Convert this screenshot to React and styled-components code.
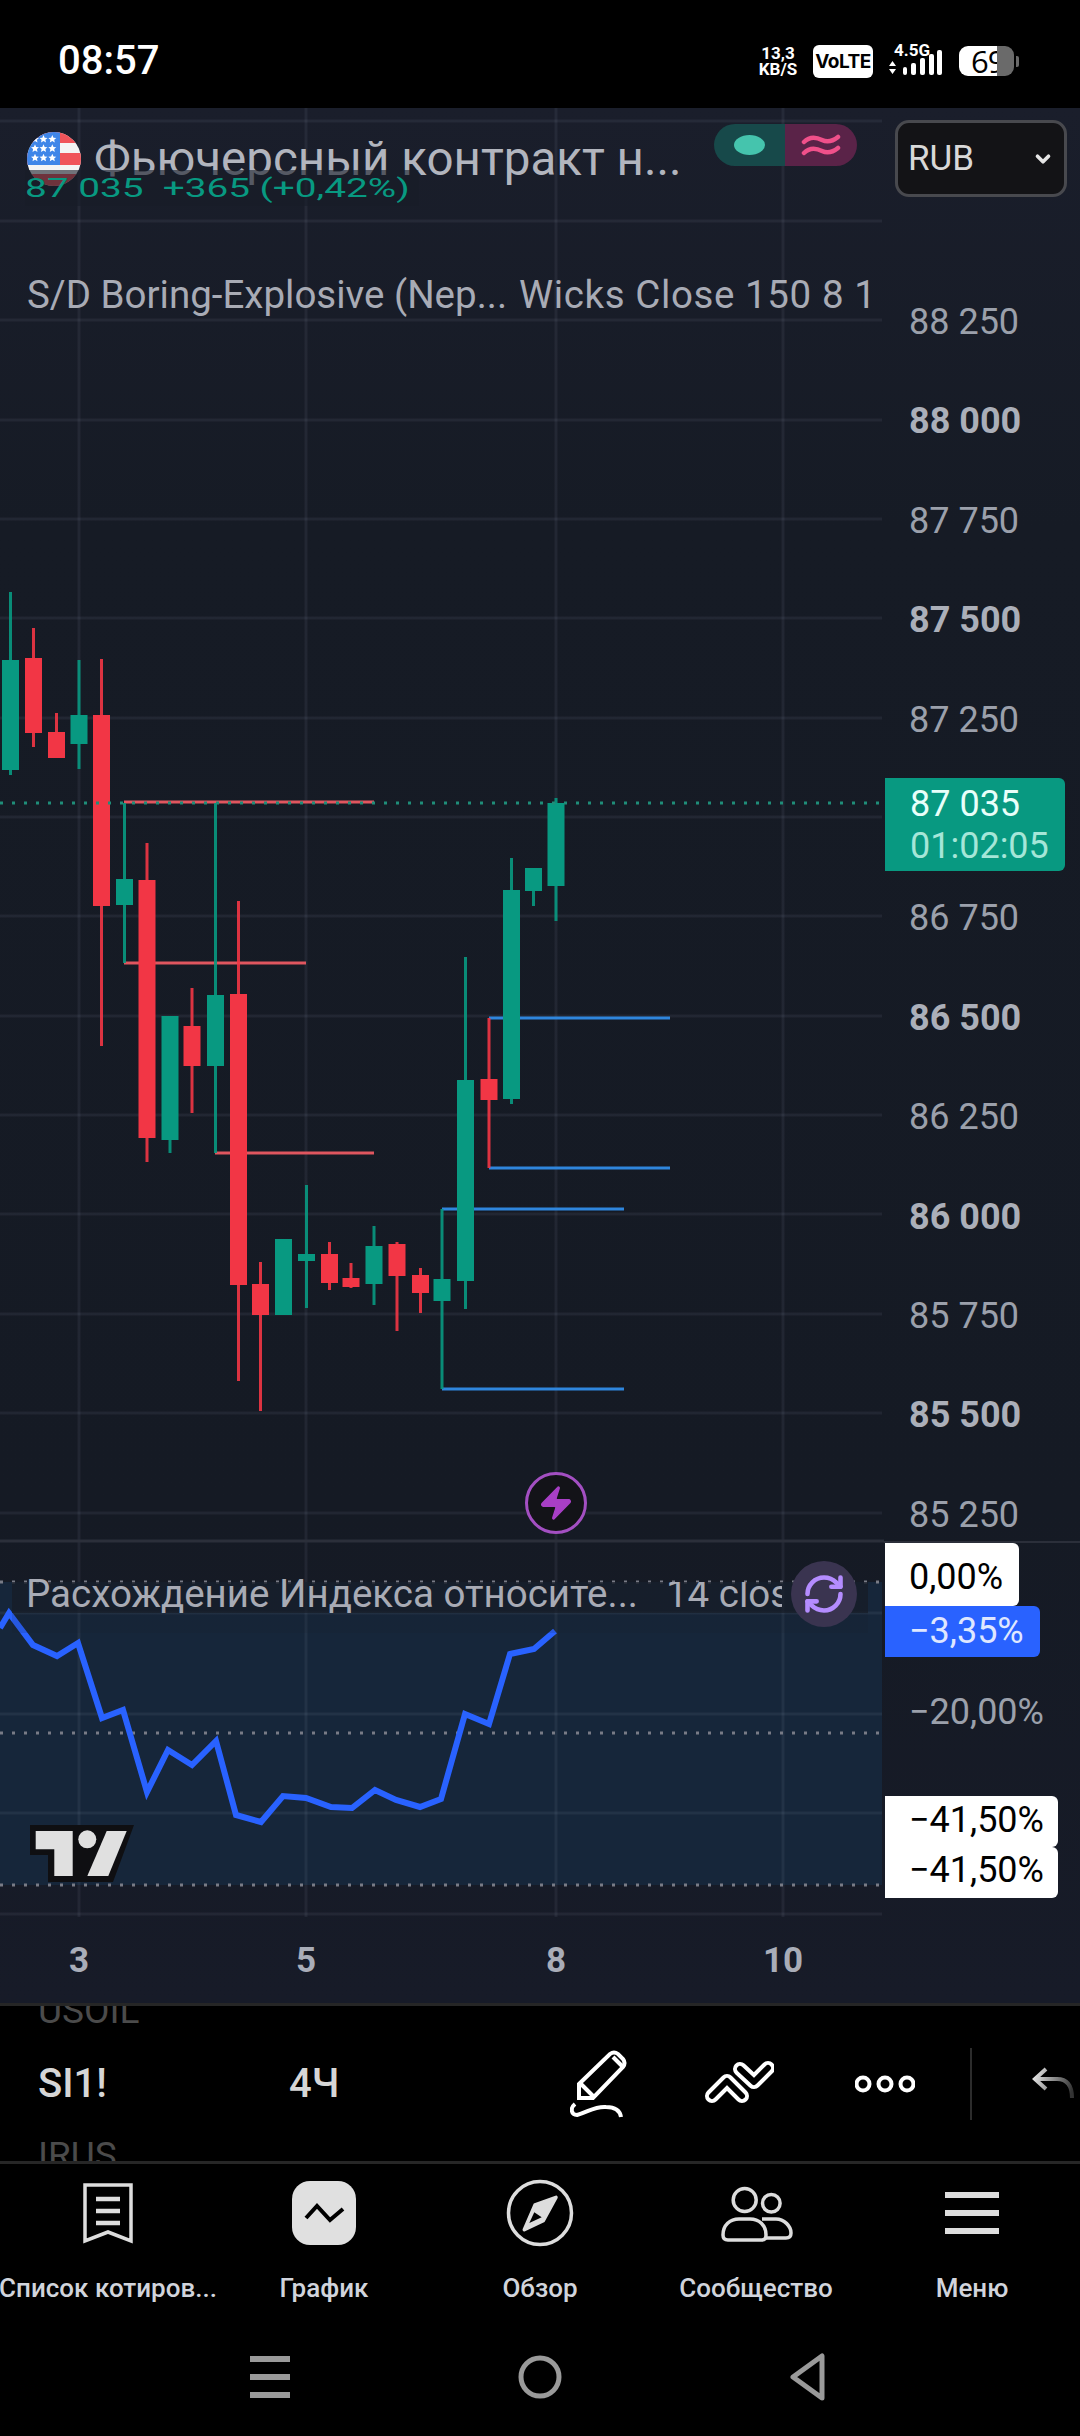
import React from 'react'
import styled, { createGlobalStyle } from 'styled-components'
import { ChevronDown, RefreshCw, Zap } from 'lucide-react'

const GlobalStyle = createGlobalStyle`
  html, body { margin: 0; padding: 0; background: #000; }
  * { box-sizing: border-box; }
`

const GREEN = '#089981'
const RED = '#f23645'
const BLUE = '#2f86dd'

// x, wick top, wick bottom, body top, body bottom, green?
const candles = [
  [10.5, 592, 775, 660, 770, 1],
  [33.5, 628, 747, 658, 733, 0],
  [56.5, 713, 758, 732, 758, 0],
  [79, 660, 769, 715, 744, 1],
  [101.5, 659, 1046, 715, 906, 0],
  [124.5, 803, 963, 879, 905, 1],
  [147, 843, 1162, 880, 1138, 0],
  [170, 1016, 1153, 1016, 1140, 1],
  [192, 988, 1113, 1026, 1066, 0],
  [215.5, 803, 1153, 995, 1066, 1],
  [238.5, 901, 1381, 994, 1285, 0],
  [260.5, 1262, 1411, 1284, 1315, 0],
  [283.5, 1239, 1315, 1239, 1315, 1],
  [306.5, 1185, 1308, 1254, 1261, 1],
  [329.5, 1242, 1290, 1254, 1283, 0],
  [351, 1263, 1288, 1278, 1287, 0],
  [374, 1226, 1305, 1246, 1284, 1],
  [397, 1242, 1331, 1244, 1276, 0],
  [420.5, 1268, 1313, 1275, 1293, 0],
  [442, 1209, 1389, 1279, 1301, 1],
  [465.5, 957, 1309, 1080, 1281, 1],
  [489, 1018, 1168, 1079, 1100, 0],
  [511.5, 858, 1104, 890, 1099, 1],
  [533.5, 868, 906, 868, 891, 1],
  [556, 798, 921, 803, 886, 1],
]

// x1, x2, y, colour
const zones = [
  [124, 374, 802, '#e0565f'],
  [124, 306, 963, '#e0565f'],
  [215, 374, 1153, '#e0565f'],
  [489, 670, 1018, BLUE],
  [489, 670, 1168, BLUE],
  [442, 624, 1209, BLUE],
  [442, 624, 1389, BLUE],
]

const gridY = [121, 221, 320, 420, 519, 618, 718, 817, 916, 1016, 1115, 1214, 1314, 1413, 1513, 1613, 1714, 1813, 1914]
const gridX = [79, 306, 556, 783]

const indicatorLine = '0,1628 9,1613 33,1645 57,1656 78,1643 102,1718 123,1710 147,1792 168,1750 192,1765 216,1741 236,1815 261,1822 283,1796 306,1798 331,1807 352,1808 375,1790 396,1800 420,1807 441,1799 465,1714 489,1724 510,1654 534,1649 555,1631'

const prices = [
  ['88 250'], ['88 000', 1], ['87 750'], ['87 500', 1], ['87 250'], [''],
  ['86 750'], ['86 500', 1], ['86 250'], ['86 000', 1], ['85 750'], ['85 500', 1], ['85 250'],
]

const flagStars = [7, 16.3, 25.7].flatMap(y => [8, 16.5, 25.3].map(x => [x, y]))

const Page = styled.div`
  width: 1080px;
  height: 2436px;
  background: #000;
  display: flex;
  flex-direction: column;
  overflow: hidden;
  font-family: Roboto, "Noto Sans", sans-serif;
`

const StatusBar = styled.div`
  height: 108px;
  flex: none;
  display: flex;
  align-items: flex-start;
  justify-content: space-between;
  padding: 38px 61px 0 58px;
  color: #fff;
`

const Clock = styled.div`
  font-size: 40px;
  line-height: 46px;
  font-weight: 500;
`

const StatusIcons = styled.div`
  height: 46px;
  display: flex;
  align-items: center;
`

const NetSpeed = styled.div`
  font-weight: 700;
  font-size: 17px;
  line-height: 16px;
  text-align: center;
  width: 40px;
`

const Volte = styled.div`
  width: 60px;
  height: 33px;
  margin-left: 15px;
  border-radius: 6px;
  background: #fff;
  color: #000;
  font: 700 19px/33px Inter, sans-serif;
  letter-spacing: -0.5px;
  text-align: center;
`

const Signal = styled.div`
  width: 56px;
  margin-left: 16px;
  height: 34px;
  position: relative;
`

const SignalLabel = styled.span`
  position: absolute;
  left: 5px;
  top: -3px;
  font-weight: 700;
  font-size: 17px;
  line-height: 18px;
`

const Battery = styled.div`
  width: 55px;
  height: 30px;
  margin-left: 14px;
  border-radius: 9px;
  background: linear-gradient(90deg, #fff 38px, #6a6a6a 38px);
  position: relative;
  overflow: hidden;
  color: #000;
  font: 500 31px/30px "Open Sans", Roboto, sans-serif;
`

const BatteryText = styled.span`
  display: block;
  width: 38px;
  padding-left: 12px;
  overflow: hidden;
  letter-spacing: -1px;
`

const BatteryTip = styled.div`
  width: 3px;
  height: 11px;
  margin-left: 2px;
  background: #6a6a6a;
  border-radius: 0 2px 2px 0;
`

const ChartArea = styled.div`
  height: 1895px;
  flex: none;
  background: linear-gradient(180deg, #1a1e2b 0, #161b25 420px, #151a24 1400px, #171b28 1895px);
  display: flex;
  flex-direction: column;
`

const Panes = styled.div`
  height: 1809px;
  display: flex;
  flex: none;
`

const Plot = styled.div`
  width: 884px;
  flex: none;
  position: relative;
  overflow: hidden;
`

const PlotSvg = styled.svg`
  display: block;
  width: 884px;
  height: 1809px;
`

const MainLegend = styled.div`
  position: absolute;
  left: 0;
  top: 0;
  width: 884px;
  padding: 24px 0 0 27px;
`

const TitleRow = styled.div`
  display: flex;
  align-items: center;
  height: 54px;
  gap: 13px;
`

const Title = styled.div`
  font-size: 47.5px;
  line-height: 54px;
  color: #b2b5be;
  white-space: nowrap;
`

const Pill = styled.div`
  position: absolute;
  left: 714px;
  top: 16px;
  width: 143px;
  height: 42px;
  border-radius: 21px;
  overflow: hidden;
  display: flex;
`

const PillPart = styled.div`
  flex: none;
  width: ${p => p.$w}px;
  background: ${p => p.$bg};
  display: flex;
  align-items: center;
  justify-content: center;
`

const PillDot = styled.div`
  width: 31px;
  height: 20px;
  border-radius: 50%;
  background: #45c4ad;
`

const ValueRow = styled.div`
  margin: -16px 0 0 -2px;
  height: 36px;
  width: 264px;
  transform: scaleX(1.49);
  transform-origin: left center;
  background: rgba(24, 28, 40, 0.6);
  color: ${GREEN};
  font-size: 26px;
  line-height: 36px;
  white-space: pre;
  position: relative;
`

const StudyRow = styled.div`
  margin-top: 67px;
  width: 842px;
  height: 44px;
  display: flex;
  gap: 12px;
  overflow: hidden;
  color: #a8abb5;
  font-size: 38.5px;
  line-height: 44px;
  white-space: nowrap;
`

const StudyInputs = styled.span`
  letter-spacing: 0.6px;
`

const IndicatorLegend = styled.div`
  position: absolute;
  left: 12px;
  top: 1474px;
  width: 856px;
  height: 51px;
  padding-left: 14px;
  background: linear-gradient(180deg, rgba(22, 27, 37, 0.72) 31px, rgba(22, 27, 37, 0.14) 31px);
  color: #a8abb5;
  font-size: 38.5px;
  line-height: 24px;
  white-space: nowrap;
  display: flex;
  gap: 28px;
  align-items: flex-start;
`

const ClippedInput = styled.span`
  width: 116px;
  overflow: hidden;
  height: 40px;
`

const SyncButton = styled.div`
  position: absolute;
  left: 791px;
  top: 1453px;
  width: 66px;
  height: 66px;
  border-radius: 50%;
  background: #3a3450;
  color: #b48cff;
  display: flex;
  align-items: center;
  justify-content: center;
`

const BoltButton = styled.div`
  position: absolute;
  left: 525px;
  top: 1364px;
  width: 62px;
  height: 62px;
  border-radius: 50%;
  border: 3px solid #a34fc2;
  background: #131318;
  color: #a83fc6;
  display: flex;
  align-items: center;
  justify-content: center;
`

const Logo = styled.svg`
  position: absolute;
  left: 30px;
  top: 1717px;
`

const Axis = styled.div`
  flex: 1;
  min-width: 0;
  display: flex;
  flex-direction: column;
  position: relative;
  font-size: 36px;
  color: #9ba0ab;
`

const CurrencySelect = styled.div`
  width: 172px;
  height: 77px;
  margin: 12px 0 0 11px;
  border: 3px solid #48494e;
  border-radius: 14px;
  background: #131316;
  color: #d8d8d8;
  font-size: 35px;
  display: flex;
  align-items: center;
  justify-content: space-between;
  padding: 0 10px 0 10px;
  flex: none;
`

const PriceScale = styled.div`
  height: 1268px;
  flex: none;
  margin-top: 76px;
  padding-left: 25px;
`

const PriceRow = styled.div`
  height: 99.4px;
  line-height: 99.4px;
  font-weight: ${p => (p.$bold ? 700 : 400)};
  color: ${p => (p.$bold ? '#abafb9' : '#9ba0ab')};
`

const LastPriceTag = styled.div`
  position: absolute;
  left: 1px;
  top: 670px;
  width: 180px;
  height: 93px;
  padding: 5px 0 0 25px;
  border-radius: 0 6px 6px 0;
  background: ${GREEN};
  color: #e8fffa;
  line-height: 42px;
`

const Countdown = styled.div`
  color: #a5e6d8;
`

const IndicatorScale = styled.div`
  flex: 1;
  border-top: 2px solid #2b2f3a;
  display: flex;
  flex-direction: column;
  align-items: flex-start;
`

const ScaleTag = styled.div`
  margin-left: 1px;
  margin-top: ${p => p.$top || 0}px;
  width: ${p => p.$w}px;
  height: ${p => p.$h}px;
  line-height: ${p => p.$lh || p.$h}px;
  padding-left: 24px;
  border-radius: 0 6px 6px 0;
  background: ${p => p.$bg || 'transparent'};
  color: ${p => p.$color};
`

const TimeAxis = styled.div`
  height: 86px;
  flex: none;
  display: grid;
  grid-template-columns: 158px 296px 204px 250px;
  align-items: center;
  text-align: center;
  font-size: 35px;
  font-weight: 700;
  color: #a9adb8;
`

const Toolbar = styled.div`
  height: 161px;
  flex: none;
  position: relative;
  overflow: hidden;
  border-top: 3px solid #262626;
  border-bottom: 3px solid #262626;
  background: #000;
  display: flex;
  align-items: center;
  padding-left: 38px;
  color: #d6d6d6;
  font-size: 40px;
  font-weight: 500;
`

const Ghost = styled.div`
  position: absolute;
  left: 38px;
  top: ${p => p.$top}px;
  font-size: 37px;
  font-weight: 400;
  line-height: 44px;
  color: #4b4b4b;
`

const Cell = styled.div`
  width: ${p => p.$w}px;
  flex: none;
`

const ToolIcon = styled.svg`
  display: block;
  flex: none;
  margin-left: ${p => p.$gap || 0}px;
`

const ToolDivider = styled.div`
  width: 2px;
  height: 72px;
  flex: none;
  margin-left: 55px;
  background: #2c2c2c;
`

const NavBar = styled.div`
  display: grid;
  grid-template-columns: repeat(5, 216px);
  height: 147px;
  flex: none;
  background: #000;
`

const NavItem = styled.div`
  display: flex;
  flex-direction: column;
  align-items: center;
  padding-top: 12px;
  min-width: 0;
`

const NavIcon = styled.div`
  height: 74px;
  display: flex;
  align-items: center;
  justify-content: center;
`

const NavLabel = styled.div`
  margin-top: 21px;
  font-size: 26px;
  line-height: 34px;
  font-weight: 500;
  color: #d1d4dc;
  white-space: nowrap;
`

const SystemNav = styled.div`
  flex: 1;
  display: grid;
  grid-template-columns: 250px 40px 210px 80px 208px 40px;
  align-items: center;
  background: #000;
  padding-top: 6px;
`

const SystemSlot = styled.div`
  grid-column: ${p => p.$col};
  display: flex;
  justify-content: center;
`

const Flag = () => (
  <svg width="54" height="54" viewBox="0 0 54 54">
    <defs>
      <clipPath id="flagClip"><circle cx="27" cy="27" r="27" /></clipPath>
    </defs>
    <g clipPath="url(#flagClip)">
      <rect width="54" height="54" fill="#f4f4f4" />
      <rect width="54" height="11" fill="#f0545a" />
      <rect y="21" width="54" height="12" fill="#f0545a" />
      <rect y="42" width="54" height="12" fill="#f0545a" />
      <rect width="33" height="33" fill="#3f86e8" />
      {flagStars.map(([x, y]) => (
        <path
          key={`${x}-${y}`}
          transform={`translate(${x} ${y})`}
          d="M0-4L1.2-1.3 4-1 1.9 .8 2.5 3.6 0 2.1-2.5 3.6-1.9 .8-4-1-1.2-1.3Z"
          fill="#fff"
        />
      ))}
    </g>
  </svg>
)

const TvLogo = () => (
  <Logo width="104" height="57" viewBox="0 0 104 57">
    <path d="M0 0H104L83 57H18V30H0Z" fill="#0f0f12" />
    <g fill="#e0e0e0">
      <path d="M5.7 6H42.7V51H24.3V24.3H5.7Z" />
      <circle cx="57.3" cy="14.3" r="9" />
      <path d="M76.7 6H96.7L78.3 51H57.3Z" />
    </g>
  </Logo>
)

const Hamburger = ({ color = '#ddd', w = 54 }) => (
  <svg width={w} height="42" fill={color} style={{ display: 'block' }}>
    <rect width={w} height="6" />
    <rect y="18" width={w} height="6" />
    <rect y="36" width={w} height="6" />
  </svg>
)

const App = () => (
  <Page>
    <GlobalStyle />
    <StatusBar>
      <Clock>08:57</Clock>
      <StatusIcons>
        <NetSpeed>13,3<br />KB/S</NetSpeed>
        <Volte>VoLTE</Volte>
        <Signal>
          <SignalLabel>4.5G</SignalLabel>
          <svg width="56" height="34" viewBox="0 0 56 34" fill="#fff">
            <path d="M0 22L3.5 17L7 22ZM0 25L3.5 30L7 25Z" />
            <rect x="14" y="23" width="4" height="8" rx="2" />
            <rect x="22" y="19" width="5" height="12" rx="2" />
            <rect x="31" y="14" width="5" height="17" rx="2" />
            <rect x="40" y="10" width="5" height="21" rx="2" />
            <rect x="48" y="6" width="5" height="25" rx="2" />
          </svg>
        </Signal>
        <Battery><BatteryText>69</BatteryText></Battery>
        <BatteryTip />
      </StatusIcons>
    </StatusBar>

    <ChartArea>
      <Panes>
        <Plot>
          <PlotSvg viewBox="0 108 884 1809">
            <rect x="0" y="1582" width="882" height="303" fill="#16263a" />
            {gridY.map(y => (
              <line key={y} x1="0" x2="882" y1={y} y2={y} stroke="rgba(178,190,220,0.08)" strokeWidth="3" />
            ))}
            {gridX.map(x => (
              <line key={x} x1={x} x2={x} y1="108" y2="1917" stroke="rgba(178,190,220,0.08)" strokeWidth="3" />
            ))}
            <line x1="0" x2="884" y1="1541" y2="1541" stroke="#2b2f3a" strokeWidth="3" />
            {zones.map(([x1, x2, y, c]) => (
              <line key={`${x1}-${y}`} x1={x1} x2={x2} y1={y} y2={y} stroke={c} strokeWidth="3" />
            ))}
            {candles.map(([x, wt, wb, bt, bb, up]) => (
              <g key={x} fill={up ? GREEN : RED}>
                <rect x={x - 1.5} y={wt} width="3" height={wb - wt} opacity="0.9" />
                <rect x={x - 8.5} y={bt} width="17" height={bb - bt} />
              </g>
            ))}
            <line x1="0" x2="882" y1="803" y2="803" stroke="#1f8d79" strokeWidth="3" strokeDasharray="3 9" />
            {[1582, 1733, 1885].map(y => (
              <line key={y} x1="0" x2="882" y1={y} y2={y} stroke="#787b86" strokeWidth="3" strokeDasharray="3 9" />
            ))}
            <polyline points={indicatorLine} fill="none" stroke="#2962ff" strokeWidth="6" strokeLinejoin="miter" />
          </PlotSvg>

          <MainLegend>
            <TitleRow>
              <Flag />
              <Title>Фьючерсный контракт н...</Title>
            </TitleRow>
            <ValueRow>{'87 035  +365 (+0,42%)'}</ValueRow>
            <StudyRow>
              <span>S/D Boring-Explosive (Nep...</span>
              <StudyInputs>Wicks Close 150 8 1</StudyInputs>
            </StudyRow>
          </MainLegend>

          <Pill>
            <PillPart $w={71} $bg="#17494a"><PillDot /></PillPart>
            <PillPart $w={72} $bg="#5a2348">
              <svg width="40" height="22" viewBox="0 0 40 22" fill="none" stroke="#f0508a" strokeWidth="4.5" strokeLinecap="round">
                <path d="M3 8C9 2 15 3 21 6C27 9 32 7 37 3" />
                <path d="M3 19C9 13 15 14 21 17C27 20 32 18 37 14" />
              </svg>
            </PillPart>
          </Pill>

          <BoltButton><Zap size={38} fill="currentColor" strokeWidth={1} /></BoltButton>

          <IndicatorLegend>
            <span>Расхождение Индекса относите...</span>
            <ClippedInput>14 close</ClippedInput>
          </IndicatorLegend>
          <SyncButton><RefreshCw size={44} strokeWidth={2.5} /></SyncButton>
          <TvLogo />
        </Plot>

        <Axis>
          <CurrencySelect>
            RUB
            <ChevronDown size={22} strokeWidth={4} color="#e6e6e6" />
          </CurrencySelect>
          <PriceScale>
            {prices.map(([label, bold], i) => (
              <PriceRow key={i} $bold={bold}>{label}</PriceRow>
            ))}
          </PriceScale>
          <LastPriceTag>
            87 035
            <Countdown>01:02:05</Countdown>
          </LastPriceTag>
          <IndicatorScale>
            <ScaleTag $w={134} $h={63} $lh={69} $bg="#fff" $color="#000">0,00%</ScaleTag>
            <ScaleTag $w={155} $h={51} $bg="#2962ff" $color="#dfe7ff">−3,35%</ScaleTag>
            <ScaleTag $w={170} $h={48} $top={31} $color="#9ba0ab">−20,00%</ScaleTag>
            <ScaleTag $w={173} $h={51} $lh={49} $top={60} $bg="#fff" $color="#000">−41,50%</ScaleTag>
            <ScaleTag $w={173} $h={51} $lh={46} $bg="#fff" $color="#000">−41,50%</ScaleTag>
          </IndicatorScale>
        </Axis>
      </Panes>

      <TimeAxis>
        <span>3</span>
        <span>5</span>
        <span>8</span>
        <span>10</span>
      </TimeAxis>
    </ChartArea>

    <Toolbar>
      <Ghost $top={-17}>USOIL</Ghost>
      <Ghost $top={128}>IRUS</Ghost>
      <Cell $w={251}>SI1!</Cell>
      <Cell $w={281}>4Ч</Cell>
      <ToolIcon width="60" height="68" viewBox="20 18 60 68" fill="none" stroke="#fff" strokeWidth="4">
        <path d="M29 52L60 22Q64 19 68 22L73 27Q76 31 73 35L43 66H29Z" />
        <path d="M31 52L44 65" />
        <path d="M63 25L72 34" />
        <path d="M25 72C20 76 21 83 27 83C38 80 45 74 56 75C65 75 70 79 71 85" />
      </ToolIcon>
      <ToolIcon $gap={74} width="70" height="45" viewBox="152 30 70 45" fill="none" strokeLinejoin="round" strokeLinecap="round">
        <polyline points="160,65 175,50 190,65" stroke="#fff" strokeWidth="14" />
        <polyline points="160,65 175,50 190,65" stroke="#000" strokeWidth="6" />
        <polyline points="188,38 202,51 216,37" stroke="#fff" strokeWidth="14" />
        <polyline points="188,38 202,51 216,37" stroke="#000" strokeWidth="6" />
      </ToolIcon>
      <ToolIcon $gap={81} width="60" height="20" viewBox="0 0 60 20" fill="none" stroke="#fff" strokeWidth="4">
        <circle cx="8" cy="10" r="6.5" />
        <circle cx="30" cy="10" r="6.5" />
        <circle cx="52" cy="10" r="6.5" />
      </ToolIcon>
      <ToolDivider />
      <ToolIcon $gap={58} width="46" height="38" viewBox="476 34 46 38" fill="none" strokeWidth="4">
        <defs>
          <linearGradient id="undoFade" gradientUnits="userSpaceOnUse" x1="480" x2="518" y1="48" y2="60">
            <stop offset="0" stopColor="#dedede" />
            <stop offset="1" stopColor="#333" />
          </linearGradient>
        </defs>
        <path d="M492 38L481 48L492 58M481 48H503C513 48 518 54 518 67" stroke="url(#undoFade)" />
      </ToolIcon>
    </Toolbar>

    <NavBar>
      <NavItem>
        <NavIcon>
          <svg width="50" height="61" viewBox="0 0 50 61" fill="none" stroke="#ddd" strokeWidth="3.5">
            <path d="M2 2H48V58L25 49L2 58Z" />
            <path d="M13 16H37M13 28H37M13 40H37" strokeWidth="4.5" />
          </svg>
        </NavIcon>
        <NavLabel>Список котиров...</NavLabel>
      </NavItem>
      <NavItem>
        <NavIcon>
          <svg width="64" height="64" viewBox="0 0 64 64">
            <rect width="64" height="64" rx="18" fill="#e0e0e0" />
            <path d="M14 37L25 25L38 39L51 28" fill="none" stroke="#000" strokeWidth="4" />
          </svg>
        </NavIcon>
        <NavLabel>График</NavLabel>
      </NavItem>
      <NavItem>
        <NavIcon>
          <svg width="68" height="68" viewBox="0 0 68 68" fill="none" stroke="#ddd" strokeWidth="3.5">
            <circle cx="34" cy="34" r="31.5" />
            <path d="M50 18.3L37.3 41.7L18.3 50.7L29 26Z" fill="#ddd" strokeLinejoin="round" />
            <path d="M28.3 33.3L35.7 38.3L23.3 44Z" fill="#000" stroke="none" />
          </svg>
        </NavIcon>
        <NavLabel>Обзор</NavLabel>
      </NavItem>
      <NavItem>
        <NavIcon>
          <svg width="73" height="60" viewBox="0 0 73 60" fill="none" stroke="#ddd" strokeWidth="3.5">
            <circle cx="24.7" cy="17" r="11.5" />
            <circle cx="51.3" cy="20.3" r="8.8" />
            <path d="M8 57H42Q46 57 46 52C46 42 39 36 30 36H19C10 36 3 42 3 52Q3 57 8 57Z" />
            <path d="M42 36H56C64 36 71 43 71 50Q71 55 66 55H46" />
          </svg>
        </NavIcon>
        <NavLabel>Сообщество</NavLabel>
      </NavItem>
      <NavItem>
        <NavIcon><Hamburger /></NavIcon>
        <NavLabel>Меню</NavLabel>
      </NavItem>
    </NavBar>

    <SystemNav>
      <SystemSlot $col={2}><Hamburger color="#9a9a9a" w={40} /></SystemSlot>
      <SystemSlot $col={4}>
        <svg width="46" height="46" viewBox="0 0 46 46" fill="none" stroke="#9a9a9a" strokeWidth="5">
          <circle cx="23" cy="23" r="19" />
        </svg>
      </SystemSlot>
      <SystemSlot $col={6}>
        <svg width="36" height="48" viewBox="0 0 36 48" fill="none" stroke="#9a9a9a" strokeWidth="5" strokeLinejoin="round">
          <path d="M32 3V45L3 24Z" />
        </svg>
      </SystemSlot>
    </SystemNav>
  </Page>
)

export default App
